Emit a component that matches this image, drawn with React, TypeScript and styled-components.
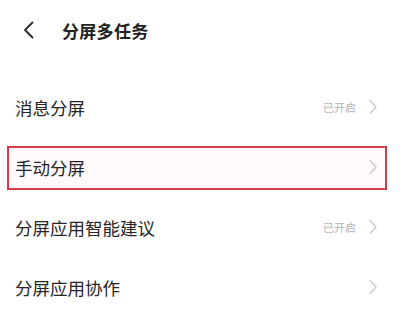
import React from "react";
import styled, { createGlobalStyle } from "styled-components";

const GlobalStyle = createGlobalStyle`
    html, body {
        margin: 0;
        padding: 0;
        background: #ffffff;
    }
    body {
        font-family: "Noto Sans CJK SC", "Noto Sans", sans-serif;
        color: #222222;
    }
`;

const Page = styled("div")`
    width: 400px;
    height: 311px;
    overflow: hidden;
    background: #ffffff;
`;

const Header = styled("div")`
    height: 60px;
    display: flex;
    align-items: center;
    padding-left: 21px;
    gap: 25px;
`;

const BackButton = styled("button")`
    background: transparent;
    border: 0;
    padding: 0;
    width: 16px;
    height: 20px;
    display: flex;
    align-items: center;
    justify-content: center;
    color: #333333;
`;

const Title = styled("h1")`
    margin: 0;
    font-size: 17px;
    font-weight: 600;
    color: #222222;
    letter-spacing: 0.3px;
`;

const List = styled("div")`
    margin-top: 17px;
    display: flex;
    flex-direction: column;
`;

const Row = styled("div")<{ $highlighted?: boolean }>`
    position: relative;
    height: 60px;
    display: flex;
    align-items: center;
    padding: 0 22px 0 15px;
    ${(props) =>
        props.$highlighted &&
        `
        &::after {
            content: "";
            position: absolute;
            top: 9px;
            bottom: 7px;
            left: 7px;
            right: 13px;
            border: 2px solid #d63a4d;
            background: rgba(214, 58, 77, 0.025);
            pointer-events: none;
        }
    `}
`;

const RowLabel = styled("span")`
    flex: 1;
    font-size: 17.5px;
    color: #252525;
`;

const RowStatus = styled("span")`
    font-size: 11px;
    color: #b4b4b4;
    margin-right: 12px;
`;

const Chevron = () => (
    <svg width="10" height="16" viewBox="0 0 10 16" fill="none">
        <path d="M2 1.5 L8 8 L2 14.5" stroke="#c9c9c9" strokeWidth="1.3" strokeLinecap="round" strokeLinejoin="round" />
    </svg>
);

const BackIcon = () => (
    <svg width="14" height="18" viewBox="0 0 14 18" fill="none">
        <path d="M10.5 1.5 L3 9 L10.5 16.5" stroke="#2a2a2a" strokeWidth="1.8" strokeLinecap="round" strokeLinejoin="round" />
    </svg>
);

type Item = { label: string; status?: string; highlighted?: boolean };

const items: Item[] = [
    { label: "消息分屏", status: "已开启" },
    { label: "手动分屏", highlighted: true },
    { label: "分屏应用智能建议", status: "已开启" },
    { label: "分屏应用协作" },
];

export default function App() {
    return (
        <Page>
            <GlobalStyle />
            <Header>
                <BackButton>
                    <BackIcon />
                </BackButton>
                <Title>分屏多任务</Title>
            </Header>
            <List>
                {items.map((item) => (
                    <Row key={item.label} $highlighted={item.highlighted}>
                        <RowLabel>{item.label}</RowLabel>
                        {item.status && <RowStatus>{item.status}</RowStatus>}
                        <Chevron />
                    </Row>
                ))}
            </List>
        </Page>
    );
}
